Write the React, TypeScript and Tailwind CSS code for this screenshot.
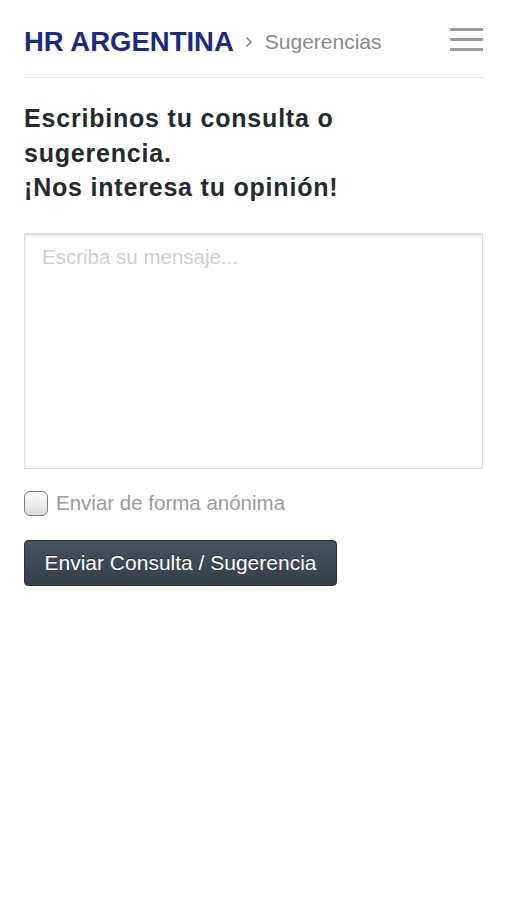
import React from 'react';

const font = { fontFamily: '"Liberation Sans", Arial, Helvetica, sans-serif' };

export default function App() {
  return (
    <div className="min-h-[900px] w-[506px] bg-white pl-[24px] pr-[23px]" style={font}>
      {/* Header */}
      <div className="flex h-[78px] items-center border-b border-[#e3e3e3] pt-[6px]">
        <span className="text-[27.5px] font-bold leading-none text-[#1b2a87]">HR ARGENTINA</span>
        <svg className="ml-[11px] mr-[12px]" width="8" height="12" viewBox="0 0 8 12" fill="none">
          <path d="M1.5 1.5 L6 6 L1.5 10.5" stroke="#8c8c8c" strokeWidth="1.6" />
        </svg>
        <span className="text-[21px] leading-none text-[#8a8a8a]">Sugerencias</span>
        <button className="ml-auto -mt-[4px] flex w-[33px] flex-col gap-[7px]" aria-label="Menú">
          <span className="h-[3px] w-full bg-[#9a9a9a]" />
          <span className="h-[3px] w-full bg-[#9a9a9a]" />
          <span className="h-[3px] w-full bg-[#9a9a9a]" />
        </button>
      </div>

      {/* Heading */}
      <h1 className="mt-[23px] text-[25px] font-bold leading-[34.5px] tracking-[0.8px] text-[#232b31]">
        Escribinos tu consulta o
        <br />
        sugerencia.
        <br />
        ¡Nos interesa tu opinión!
      </h1>

      {/* Message */}
      <textarea
        placeholder="Escriba su mensaje..."
        className="mt-[28px] block h-[236px] w-full resize-none border border-[#dcdcdc] px-[17px] pt-[11px] text-[20.5px] leading-[24px] text-[#333] shadow-[inset_0_2px_2px_rgba(0,0,0,0.12)] outline-none placeholder:text-[#d0d0d0]"
        style={font}
      />

      {/* Anonymous */}
      <label className="mt-[22px] flex items-center">
        <span className="h-[25px] w-[24px] rounded-[6px] border border-[#7c7c7c] bg-gradient-to-b from-[#fdfdfd] to-[#dcdcdc] shadow-[inset_0_1px_1px_rgba(255,255,255,0.9)]" />
        <span className="ml-[8px] text-[20.5px] leading-none text-[#9b9b9b]">Enviar de forma anónima</span>
      </label>

      {/* Submit */}
      <button
        className="mt-[24px] flex h-[46px] w-[313px] items-center justify-center rounded-[4px] border border-[#2a343c] bg-gradient-to-b from-[#46535e] to-[#33404a] text-[21px] text-white [text-shadow:0_-1px_0_rgba(0,0,0,0.4)]"
        style={font}
      >
        Enviar Consulta / Sugerencia
      </button>
    </div>
  );
}
